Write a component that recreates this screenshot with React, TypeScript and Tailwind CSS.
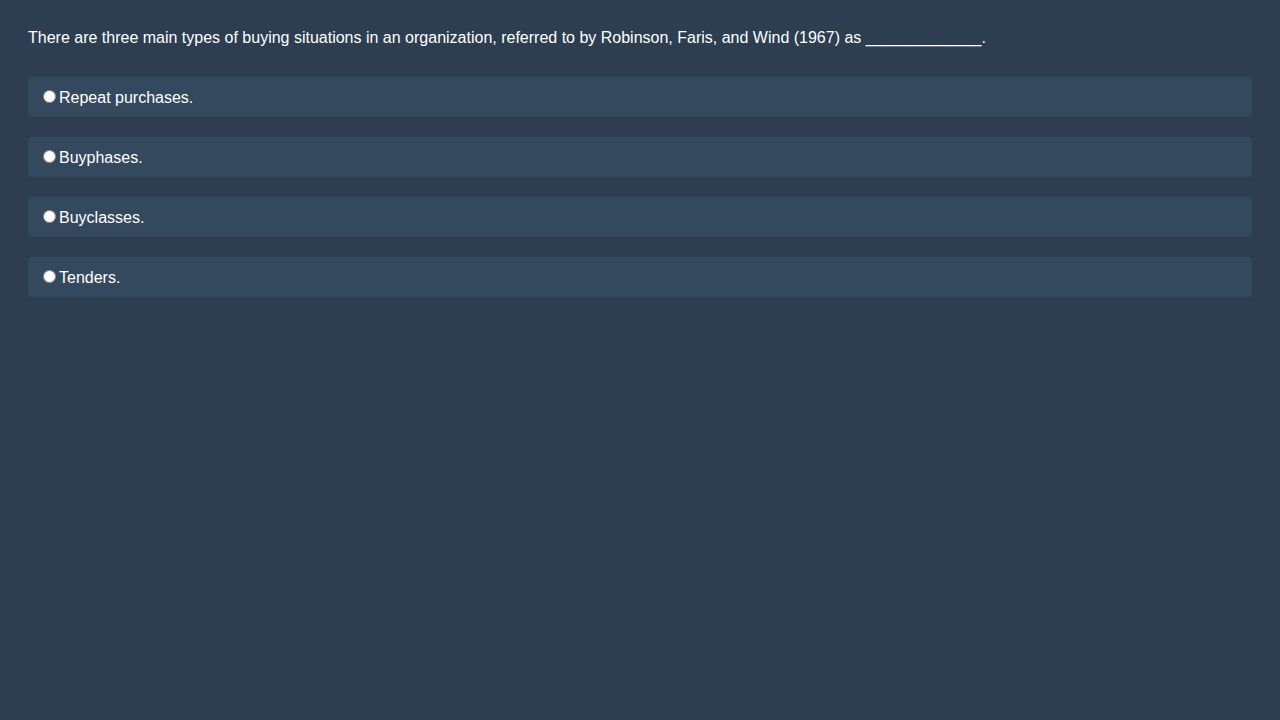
import { useState } from "react";

const options = ["Repeat purchases.", "Buyphases.", "Buyclasses.", "Tenders."];

export default function App() {
  const [selected, setSelected] = useState<string | null>(null);

  return (
    <div
      className="min-h-screen bg-[#2c3e50] text-white px-[28px] pt-[29px]"
      style={{ fontFamily: '"Liberation Sans", Arial, sans-serif' }}
    >
      <p className="text-[16px] leading-[18px] mb-[30px]">
        There are three main types of buying situations in an organization, referred to by Robinson, Faris, and Wind (1967) as _____________.
      </p>

      <div className="flex flex-col gap-[20px]">
        {options.map((opt) => (
          <label
            key={opt}
            className="flex items-center h-[40px] px-[10px] pt-[2px] bg-[#34495e] rounded-[4px] text-[16px] leading-[18px] cursor-pointer"
          >
            <input
              type="radio"
              name="answer"
              className="ml-[5px] mr-[3px] mt-[-4px] w-[13px] h-[13px]"
              checked={selected === opt}
              onChange={() => setSelected(opt)}
            />
            <span>{opt}</span>
          </label>
        ))}
      </div>
    </div>
  );
}
